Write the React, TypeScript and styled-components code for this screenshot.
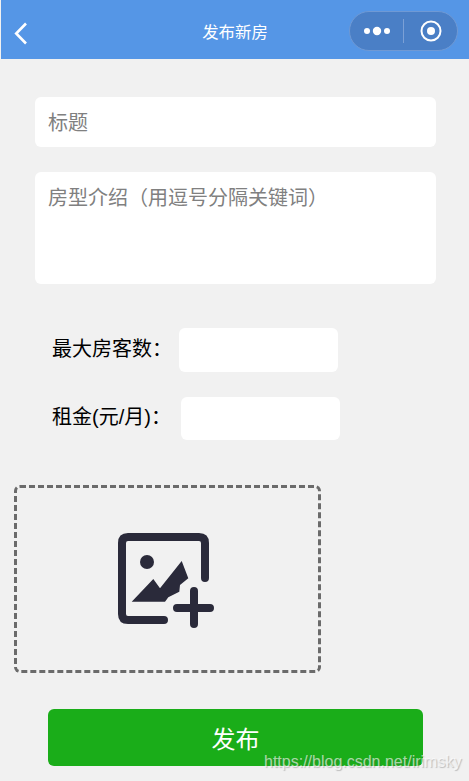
import React from 'react';
import styled, { createGlobalStyle } from 'styled-components';

const GlobalStyle = createGlobalStyle`
  html, body {
    margin: 0;
    padding: 0;
    background: #f1f1f1;
  }
  * {
    box-sizing: border-box;
  }
`;

const Page = styled.div`
  position: relative;
  width: 469px;
  height: 781px;
  overflow: hidden;
  background: #f1f1f1;
  font-family: "Liberation Sans", "Noto Sans CJK SC", sans-serif;
`;

const Header = styled.header`
  position: relative;
  height: 59px;
  margin-left: 1px;
  background: #5596e6;
  display: flex;
  align-items: center;
  justify-content: center;
`;

const BackButton = styled.svg`
  position: absolute;
  left: 12px;
  top: 22px;
`;

const HeaderTitle = styled.h1`
  margin: 2px 0 0 0;
  font-size: 16.4px;
  font-weight: 400;
  color: #fff;
`;

const Capsule = styled.div`
  position: absolute;
  left: 348px;
  top: 11px;
  width: 109px;
  height: 40px;
  border-radius: 20px;
  background: #4a7fc6;
  border: 1px solid #6f99d4;
  display: flex;
  align-items: center;
`;

const CapsuleCell = styled.div`
  flex: 1;
  display: flex;
  align-items: center;
  justify-content: center;
`;

const CapsuleLine = styled.div`
  width: 1px;
  height: 24px;
  background: #7ba0d6;
`;

const Form = styled.main`
  display: flex;
  flex-direction: column;
`;

const TitleField = styled.input`
  display: block;
  width: 401px;
  height: 50px;
  margin: 38px 0 0 35px;
  padding: 2px 13px 0;
  border: 0;
  border-radius: 6px;
  background: #fff;
  font: inherit;
  font-size: 20px;
  outline: none;

  &::placeholder {
    color: #808080;
    opacity: 1;
  }
`;

const IntroField = styled.textarea`
  display: block;
  width: 401px;
  height: 112px;
  margin: 25px 0 0 35px;
  padding: 12px 13px;
  border: 0;
  border-radius: 6px;
  background: #fff;
  font: inherit;
  font-size: 20px;
  line-height: 28px;
  resize: none;
  outline: none;

  &::placeholder {
    color: #808080;
    opacity: 1;
  }
`;

const Row = styled.div<{ $top: number; $height: number }>`
  display: flex;
  align-items: center;
  height: ${(p) => p.$height}px;
  margin-top: ${(p) => p.$top}px;
  padding-left: 52px;
`;

const Label = styled.label<{ $width: number }>`
  width: ${(p) => p.$width}px;
  margin-bottom: 6px;
  white-space: nowrap;
  font-size: 20px;
  color: #000;
`;

const NumberField = styled.input`
  width: 159px;
  height: 100%;
  border: 0;
  border-radius: 6px;
  background: #fff;
  outline: none;
`;

const Upload = styled.div`
  width: 307px;
  height: 188px;
  margin: 45px 0 0 14px;
  border: 3px dashed #6b6b6b;
  border-radius: 6px;
  display: flex;
  align-items: center;
  justify-content: center;
`;

const UploadIcon = styled.svg`
  margin: 4px 2px 0 0;
`;

const SubmitButton = styled.button`
  display: block;
  width: 375px;
  height: 57px;
  margin: 36px 0 0 48px;
  border: 0;
  border-radius: 6px;
  background: #1aad19;
  color: #fff;
  font: inherit;
  font-size: 24px;
`;

const Watermark = styled.span`
  position: absolute;
  left: 264px;
  top: 753px;
  font-size: 16px;
  color: rgba(255, 255, 255, 0.62);
  text-shadow: 1px 1px 1px rgba(90, 90, 90, 0.35);
  white-space: nowrap;
`;

export default function App() {
  return (
    <Page>
      <GlobalStyle />
      <Header>
        <BackButton width="16" height="24" viewBox="0 0 16 24" fill="none">
          <path d="M13 1.5 L3.2 11.5 L13 21.5" stroke="#fff" strokeWidth="2.6" />
        </BackButton>
        <HeaderTitle>发布新房</HeaderTitle>
        <Capsule>
          <CapsuleCell>
            <svg width="28" height="12" viewBox="0 0 28 12" fill="#fff">
              <circle cx="4" cy="6" r="3" />
              <circle cx="14" cy="6" r="4.2" />
              <circle cx="24" cy="6" r="3" />
            </svg>
          </CapsuleCell>
          <CapsuleLine />
          <CapsuleCell>
            <svg width="22" height="22" viewBox="0 0 22 22" fill="none">
              <circle cx="11" cy="11" r="9.5" stroke="#fff" strokeWidth="2" />
              <circle cx="11" cy="11" r="4" fill="#fff" />
            </svg>
          </CapsuleCell>
        </Capsule>
      </Header>
      <Form>
        <TitleField placeholder="标题" />
        <IntroField placeholder="房型介绍（用逗号分隔关键词）" />
        <Row $top={44} $height={44}>
          <Label $width={127}>最大房客数：</Label>
          <NumberField />
        </Row>
        <Row $top={25} $height={43}>
          <Label $width={129}>租金(元/月)：</Label>
          <NumberField />
        </Row>
        <Upload>
          <UploadIcon width="103" height="102" viewBox="115 530 103 102" fill="none">
            <path
              d="M205 578 V543 Q205 537 199 537 H128 Q122 537 122 543 V614 Q122 620 128 620 H164"
              stroke="#2a2a3a"
              strokeWidth="8"
              strokeLinecap="round"
            />
            <circle cx="147" cy="562" r="7" fill="#2a2a3a" />
            <path
              d="M131.7 601.7 L153.3 579 L160 588.3 L181.7 561 L188.3 578.3 L180 585 L179.3 591.7 L168.3 597.3 L165 601.7 Z"
              fill="#2a2a3a"
            />
            <path
              d="M194 591 V624 M177 608 H210"
              stroke="#2a2a3a"
              strokeWidth="8"
              strokeLinecap="round"
            />
          </UploadIcon>
        </Upload>
        <SubmitButton>发布</SubmitButton>
      </Form>
      <Watermark>https://blog.csdn.net/irimsky</Watermark>
    </Page>
  );
}
